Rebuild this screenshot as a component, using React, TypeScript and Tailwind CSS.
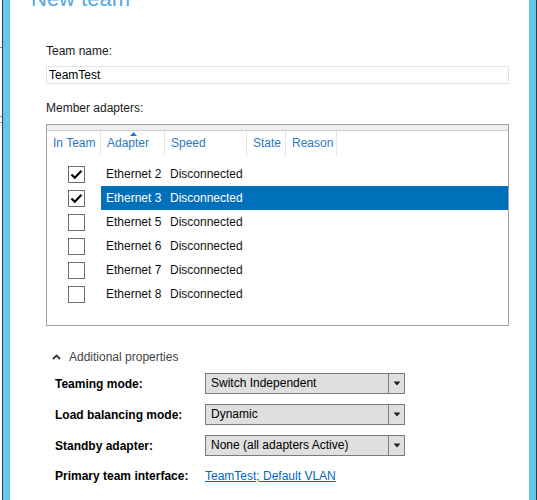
import React from "react";

const font = { fontFamily: '"Segoe UI", "Liberation Sans", Arial, sans-serif' };

const adapters = [
  { name: "Ethernet 2", checked: true, selected: false },
  { name: "Ethernet 3", checked: true, selected: true },
  { name: "Ethernet 5", checked: false, selected: false },
  { name: "Ethernet 6", checked: false, selected: false },
  { name: "Ethernet 7", checked: false, selected: false },
  { name: "Ethernet 8", checked: false, selected: false },
];

function CheckBox({ checked }: { checked: boolean }) {
  return (
    <div className="w-[17px] h-[17px] border border-[#6e6e6e] bg-white flex items-center justify-center">
      {checked && (
        <svg width="13" height="11" viewBox="0 0 13 11">
          <path d="M1.5 5.5 L4.8 8.8 L11.5 1.8" fill="none" stroke="#000" strokeWidth="2.2" />
        </svg>
      )}
    </div>
  );
}

function Dropdown({ value }: { value: string }) {
  return (
    <div className="h-[21px] w-[200px] border border-[#7a7a7a] bg-[#dfdfdf] flex">
      <div className="flex-1 pl-[5px] leading-[19px] text-[12px] text-black">{value}</div>
      <div className="w-[16px] border-l border-[#7a7a7a] flex items-center justify-center">
        <svg width="8" height="5" viewBox="0 0 8 5">
          <path d="M0.5 0.5 H7.5 L4 4.5 Z" fill="#222" />
        </svg>
      </div>
    </div>
  );
}

export default function App() {
  return (
    <div className="w-[537px] h-[500px] flex bg-white overflow-hidden" style={font}>
      {/* window edge behind */}
      <div className="w-[2px] flex flex-col bg-white">
        <div className="h-px bg-[#9a9a9a] mt-[47px]" />
        <div className="h-px bg-[#9a9a9a] mt-[68px]" />
        <div className="h-px bg-[#9a9a9a] mt-[5px]" />
      </div>
      <div className="w-px bg-[#3a3a3a]" />
      <div className="w-[7px] bg-[#64c8ec]" />

      {/* dialog body */}
      <div className="flex-1 flex flex-col pl-[36px] pr-[20px]">
        <div className="h-[8px] overflow-hidden -ml-[15px]">
          <div className="text-[22px] leading-[22px] -mt-[12px] text-[#58a9de] font-light whitespace-nowrap">
            New team
          </div>
        </div>

        <div className="mt-[35px] text-[12px] leading-[16px] text-[#1a1a1a]">Team name:</div>
        <div className="mt-[7px] h-[18px] border border-[#e2e2ea] pl-[2px] text-[12px] leading-[16px] text-black">
          TeamTest
        </div>

        <div className="mt-[16px] text-[12px] leading-[16px] text-[#1a1a1a]">Member adapters:</div>

        {/* adapters list */}
        <div className="mt-[8px] h-[202px] border border-[#a0a0a0] flex flex-col">
          <div className="h-[6px] bg-[#eeeeee] border-b border-[#d2d2d2]" />
          <div className="h-[25px] flex text-[12px] leading-[24px] text-[#2a7ac3]">
            <div className="w-[54px] border-r border-[#e6e6e6] pl-[6px]">In Team</div>
            <div className="relative w-[64px] border-r border-[#e6e6e6] pl-[6px]">
              Adapter
              <svg className="absolute left-[29px] top-[1px]" width="7" height="4" viewBox="0 0 7 4">
                <path d="M0 4 L3.5 0 L7 4 Z" fill="#2a7ac3" />
              </svg>
            </div>
            <div className="w-[82px] border-r border-[#e6e6e6] pl-[6px]">Speed</div>
            <div className="w-[39px] border-r border-[#e6e6e6] pl-[6px]">State</div>
            <div className="w-[51px] border-r border-[#e6e6e6] pl-[6px]">Reason</div>
          </div>
          <div className="mt-[6px] flex flex-col">
            {adapters.map((a) => (
              <div key={a.name} className="h-[24px] flex text-[12px] leading-[25px]">
                <div className="w-[54px] pl-[21px] flex items-center">
                  <CheckBox checked={a.checked} />
                </div>
                <div className={`flex-1 flex ${a.selected ? "bg-[#0070ba] text-white" : "text-[#111]"}`}>
                  <div className="w-[64px] pl-[5px] whitespace-nowrap">{a.name}</div>
                  <div className="pl-[5px]">Disconnected</div>
                </div>
              </div>
            ))}
          </div>
        </div>

        {/* additional properties */}
        <div className="mt-[23px] flex items-center text-[12px] leading-[16px] text-[#444]">
          <svg className="ml-[6px]" width="9" height="6" viewBox="0 0 9 6">
            <path d="M1 5 L4.5 1.5 L8 5" fill="none" stroke="#333" strokeWidth="1.8" />
          </svg>
          <span className="ml-[8px]">Additional properties</span>
        </div>

        <div className="mt-[8px] pl-[9px] grid grid-cols-[150px_200px] gap-y-[9px] text-[12px]">
          <div className="font-bold leading-[21px] pt-[1px] text-black">Teaming mode:</div>
          <Dropdown value="Switch Independent" />
          <div className="font-bold leading-[21px] pt-[1px] text-black">Load balancing mode:</div>
          <Dropdown value="Dynamic" />
          <div className="font-bold leading-[21px] pt-[1px] text-black">Standby adapter:</div>
          <Dropdown value="None (all adapters Active)" />
          <div className="font-bold leading-[21px] text-black whitespace-nowrap">Primary team interface:</div>
          <div className="leading-[21px] whitespace-nowrap">
            <span className="text-[#0066cc] underline">TeamTest; Default VLAN</span>
          </div>
        </div>
      </div>

      <div className="w-[7px] bg-[#64c8ec]" />
      <div className="w-px bg-[#3a3a3a]" />
    </div>
  );
}
